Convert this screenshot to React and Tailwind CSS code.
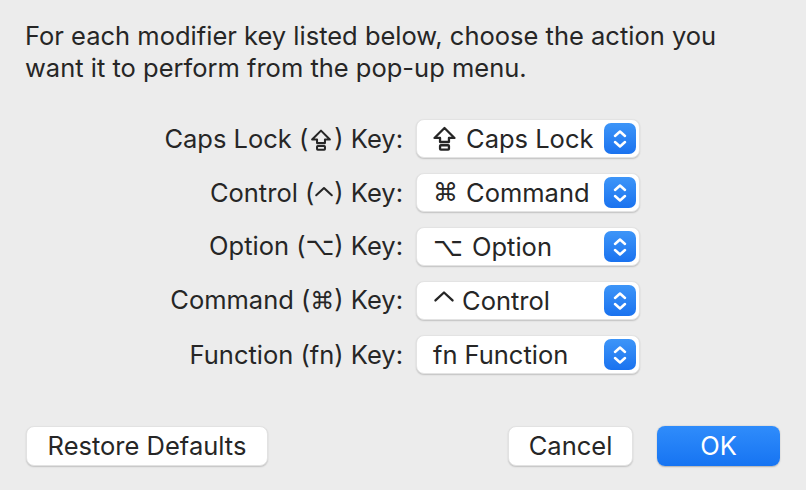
import React from 'react';

const CapsIcon = ({ size = 22 }) => (
    <svg width={size} height={size} viewBox="0 0 20 20" fill="none" stroke="currentColor" strokeWidth="1.7" strokeLinejoin="round">
        <path d="M10 2.2 L17.4 9.6 H13.3 V12.6 H6.7 V9.6 H2.6 Z" />
        <rect x="6.7" y="15" width="6.6" height="3.2" rx="0.6" />
    </svg>
);

const CtrlIcon = ({ size = 18 }) => (
    <svg width={size} height={size} viewBox="0 0 18 18" fill="none" stroke="currentColor" strokeWidth="1.9" strokeLinecap="round" strokeLinejoin="round">
        <path d="M2 11 L9 4.5 L16 11" />
    </svg>
);

const Stepper = () => (
    <div className="w-[32px] h-[31px] rounded-[7px] bg-gradient-to-b from-[#3d95f8] to-[#1a72ef] flex items-center justify-center">
        <svg width="16" height="24" viewBox="0 0 16 24" fill="none" stroke="white" strokeWidth="2.5" strokeLinecap="round" strokeLinejoin="round">
            <path d="M3 9 L8 4.5 L13 9" />
            <path d="M3 15 L8 19.5 L13 15" />
        </svg>
    </div>
);

const rows = [
    {
        label: <>Caps Lock (<span className="inline-block align-[-4px] mx-[1px]"><CapsIcon size={24} /></span>) Key:</>,
        icon: <span className="inline-flex mr-[8px] -ml-[2px]"><CapsIcon size={27} /></span>,
        value: 'Caps Lock',
    },
    {
        label: <>Control (<span className="inline-block align-[-1px]"><CtrlIcon size={20} /></span>) Key:</>,
        icon: <span className="mr-[8px] font-['DejaVu_Sans'] text-[25px]">⌘</span>,
        value: 'Command',
    },
    {
        label: <>Option (<span className="font-['DejaVu_Sans'] text-[25px]">⌥</span>) Key:</>,
        icon: <span className="mr-[9px] font-['DejaVu_Sans'] text-[26px]">⌥</span>,
        value: 'Option',
    },
    {
        label: <>Command (<span className="font-['DejaVu_Sans'] text-[24px]">⌘</span>) Key:</>,
        icon: <span className="inline-flex mr-[7px] -mt-[5px]"><CtrlIcon size={22} /></span>,
        value: 'Control',
    },
    { label: <>Function (fn) Key:</>, icon: <span className="mr-[7px]">fn</span>, value: 'Function' },
];

const Button = ({ children, primary, className = '' }) => (
    <button
        className={
            primary
                ? `h-[40px] rounded-[8px] bg-gradient-to-b from-[#2f8cfb] to-[#1674f2] text-white shadow-[0_0.5px_1.5px_rgba(0,0,0,0.25)] ${className}`
                : `h-[40px] rounded-[8px] bg-white text-[#262626] border border-[#e2e2e2] shadow-[0_1px_1.5px_rgba(0,0,0,0.18)] ${className}`
        }
    >
        {children}
    </button>
);

export default function App() {
    return (
        <div className="w-[806px] h-[490px] bg-[#ececec] text-[#262626] font-['Inter',sans-serif] text-[25.5px] leading-[32px] antialiased flex flex-col">
            {/* Intro */}
            <p className="pt-[20px] pl-[25px] w-[735px]">
                For each modifier key listed below, choose the action you want it to perform from the pop-up menu.
            </p>

            {/* Modifier rows */}
            <div className="mt-[35px] flex flex-col gap-[15px]">
                {rows.map((r, i) => (
                    <div key={i} className="flex items-center">
                        <div className="w-[403px] text-right whitespace-nowrap">{r.label}</div>
                        <div className="ml-[13px] w-[224px] h-[39px] rounded-[8px] bg-white border border-[#e3e3e3] shadow-[0_1px_1.5px_rgba(0,0,0,0.18)] flex items-center pl-[16px] pr-[3px]">
                            <div className="flex-1 flex items-center whitespace-nowrap">
                                {r.icon}
                                <span>{r.value}</span>
                            </div>
                            <Stepper />
                        </div>
                    </div>
                ))}
            </div>

            {/* Buttons */}
            <div className="mt-auto mb-[24px] px-[26px] flex items-center">
                <Button className="w-[242px]">Restore Defaults</Button>
                <div className="flex-1" />
                <Button className="w-[125px]">Cancel</Button>
                <Button primary className="w-[123px] ml-[24px]">OK</Button>
            </div>
        </div>
    );
}
